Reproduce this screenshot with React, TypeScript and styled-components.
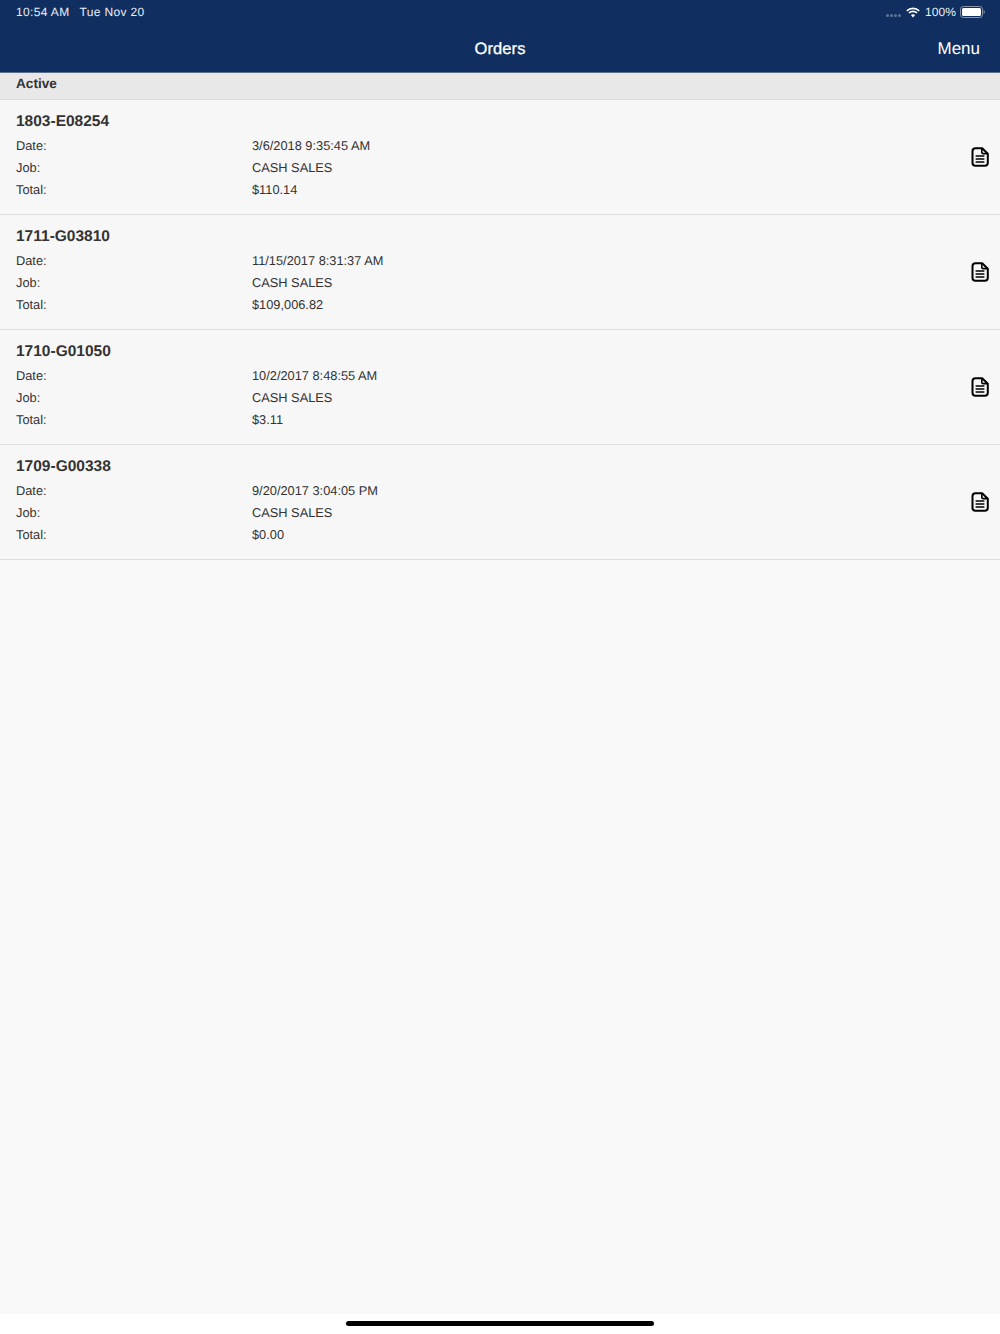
import React from "react";
import styled, { createGlobalStyle } from "styled-components";

const Global = createGlobalStyle`
  html, body { margin: 0; padding: 0; height: 100%; background: #ffffff; }
  #root { height: 1334px; }
`;

const Page = styled.div`
  width: 1000px;
  height: 1334px;
  display: flex;
  flex-direction: column;
  overflow: hidden;
  font-family: "Liberation Sans", Arial, sans-serif;
  text-rendering: geometricPrecision;
  color: #333333;
  background: #ffffff;
`;

const Header = styled.header`
  height: 72px;
  flex: none;
  background: #102f60;
  color: #ffffff;
  display: flex;
  flex-direction: column;
  border-bottom: 1px solid #5a6c88;
`;

const StatusBar = styled.div`
  height: 24px;
  flex: none;
  display: flex;
  justify-content: space-between;
  align-items: center;
  padding: 0 15px 0 16px;
  font-size: 12px;
  letter-spacing: 0.35px;
  color: #e9edf3;
`;

const StatusLeft = styled.div`
  display: flex;
  gap: 10px;
`;

const StatusRight = styled.div`
  display: flex;
  align-items: center;
`;

const Signal = styled.div`
  display: flex;
  gap: 1px;
  margin: 6px 5px 0 0;
`;

const SignalDot = styled.span`
  width: 3px;
  height: 3px;
  border-radius: 50%;
  background: #5f7596;
`;

const Percent = styled.span`
  margin: 0 4px 0 5px;
  letter-spacing: 0.1px;
`;

const NavBar = styled.div`
  flex: 1;
  display: flex;
  align-items: center;
  justify-content: center;
  position: relative;
  padding-top: 2px;
`;

const NavTitle = styled.h1`
  margin: 0;
  font-size: 16.5px;
  font-family: "Liberation Sans", Arial, sans-serif;
  font-weight: 500;
  -webkit-text-stroke: 0.3px #ffffff;
  letter-spacing: 0.1px;
`;

const MenuButton = styled.span`
  position: absolute;
  right: 20px;
  top: 15px;
  font-size: 17px;
`;

const Content = styled.main`
  flex: none;
  height: 1241px;
  background: #f9f9f9;
`;

const SectionHeader = styled.div`
  height: 27px;
  box-sizing: border-box;
  background: #e8e8e8;
  border-bottom: 1px solid #dddddd;
  padding: 3px 16px 0;
  font-size: 13.6px;
  line-height: 16px;
  font-weight: 700;
`;

const Order = styled.article`
  height: 115px;
  box-sizing: border-box;
  background: #f7f7f7;
  border-bottom: 1px solid #dedede;
  padding: 11px 11px 0 16px;
  display: flex;
  align-items: center;
  justify-content: space-between;
`;

const OrderBody = styled.div`
  flex: 1;
  align-self: flex-start;
`;

const OrderNumber = styled.h2`
  margin: 0 0 3px;
  font-size: 15.5px;
  line-height: 21px;
  font-weight: 700;
`;

const Row = styled.div`
  display: grid;
  grid-template-columns: 236px 1fr;
  font-size: 12.8px;
  line-height: 22px;
`;

const Footer = styled.div`
  flex: 1;
  display: flex;
  justify-content: center;
  align-items: flex-start;
  padding-top: 7px;
`;

const HomeIndicator = styled.div`
  width: 308px;
  height: 5px;
  border-radius: 3px;
  background: #000000;
`;

const DocSvg = styled.svg`
  flex: none;
  margin-top: -11px;
`;

const orders = [
  { id: "1803-E08254", date: "3/6/2018 9:35:45 AM", total: "$110.14" },
  { id: "1711-G03810", date: "11/15/2017 8:31:37 AM", total: "$109,006.82" },
  { id: "1710-G01050", date: "10/2/2017 8:48:55 AM", total: "$3.11" },
  { id: "1709-G00338", date: "9/20/2017 3:04:05 PM", total: "$0.00" },
];

const DocIcon = () => (
  <DocSvg width="18" height="20" viewBox="0 0 18 20" fill="none">
    <path
      d="M4.5 1.2h6.7l5.6 5.6V15.8c0 1.7-1.3 3-3 3H4.5c-1.7 0-3-1.3-3-3V4.2c0-1.7 1.3-3 3-3z"
      stroke="#000"
      strokeWidth="2"
      strokeLinejoin="round"
    />
    <path d="M10.8 1.5v3.4c0 1 .7 1.7 1.7 1.7h4" stroke="#000" strokeWidth="1.6" />
    <path d="M4.6 9h8.8M4.6 12h8.8M4.6 15h8.8" stroke="#000" strokeWidth="1.6" />
  </DocSvg>
);

const WifiIcon = () => (
  <svg width="14" height="11" viewBox="0 0 14 11" fill="none">
    <path d="M.8 3.8a9 9 0 0 1 12.4 0" stroke="#fff" strokeWidth="1.7" />
    <path d="M3 6a5.8 5.8 0 0 1 8 0" stroke="#fff" strokeWidth="1.7" />
    <path d="M7 10.6 4.9 8.1a3.2 3.2 0 0 1 4.2 0z" fill="#fff" />
  </svg>
);

const BatteryIcon = () => (
  <svg width="25" height="12" viewBox="0 0 25 12" fill="none">
    <rect x=".5" y=".5" width="22" height="11" rx="2.8" stroke="#8795ab" />
    <rect x="2" y="2" width="19" height="8" rx="1.5" fill="#fff" />
    <path d="M23.6 4.2c.8.2 1.2.9 1.2 1.8s-.4 1.6-1.2 1.8z" fill="#8795ab" />
  </svg>
);

export default function App() {
  return (
    <Page>
      <Global />
      <Header>
        <StatusBar>
          <StatusLeft>
            <span>10:54 AM</span>
            <span>Tue Nov 20</span>
          </StatusLeft>
          <StatusRight>
            <Signal>
              <SignalDot />
              <SignalDot />
              <SignalDot />
              <SignalDot />
            </Signal>
            <WifiIcon />
            <Percent>100%</Percent>
            <BatteryIcon />
          </StatusRight>
        </StatusBar>
        <NavBar>
          <NavTitle>Orders</NavTitle>
          <MenuButton>Menu</MenuButton>
        </NavBar>
      </Header>
      <Content>
        <SectionHeader>Active</SectionHeader>
        {orders.map((o) => (
          <Order key={o.id}>
            <OrderBody>
              <OrderNumber>{o.id}</OrderNumber>
              <Row>
                <span>Date:</span>
                <span>{o.date}</span>
              </Row>
              <Row>
                <span>Job:</span>
                <span>CASH SALES</span>
              </Row>
              <Row>
                <span>Total:</span>
                <span>{o.total}</span>
              </Row>
            </OrderBody>
            <DocIcon />
          </Order>
        ))}
      </Content>
      <Footer>
        <HomeIndicator />
      </Footer>
    </Page>
  );
}
